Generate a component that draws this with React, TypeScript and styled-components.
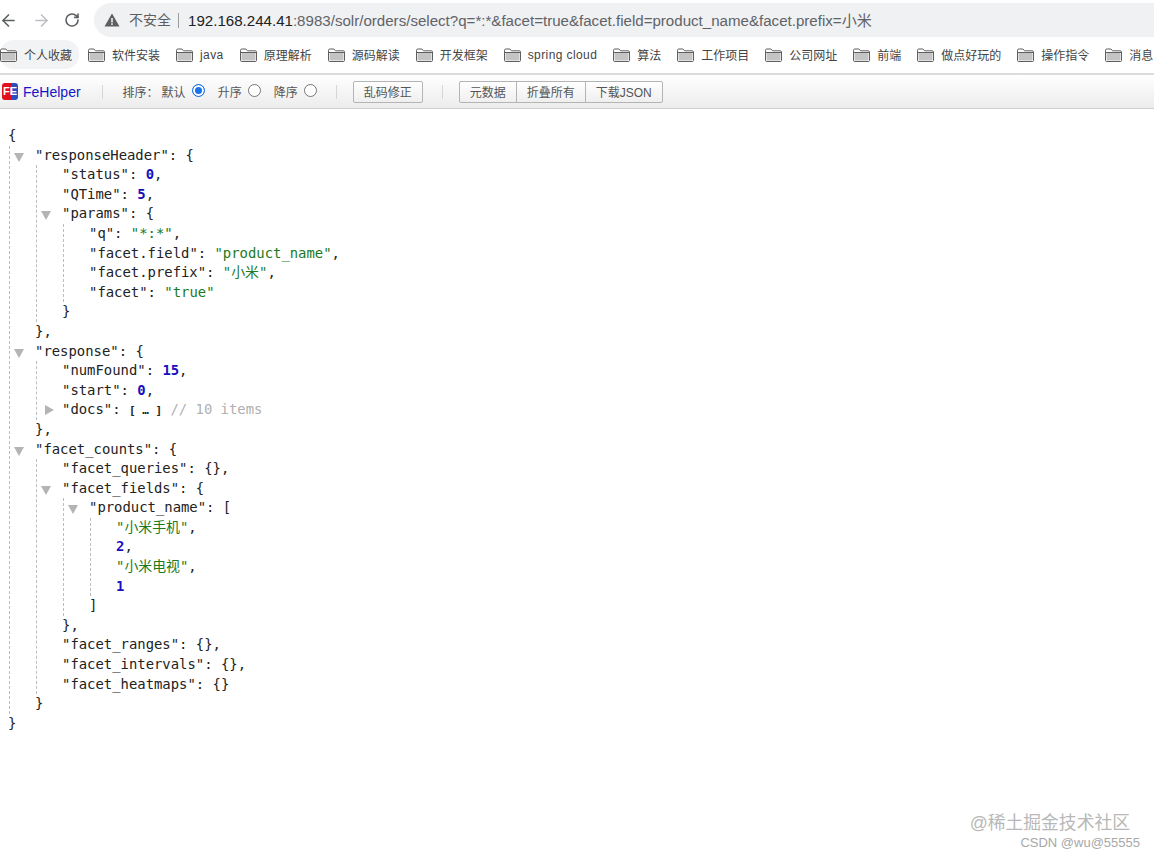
import { ReactNode } from "react"
import styled, { createGlobalStyle } from "styled-components"
import { ArrowLeft, ArrowRight, RotateCw } from "lucide-react"

type JsonValue = string | number | JsonValue[] | { [key: string]: JsonValue } | Collapsed
interface Collapsed {
  collapsed: number
}

const bookmarks = ['个人收藏', '软件安装', 'java', '原理解析', '源码解读', '开发框架', 'spring cloud', '算法', '工作项目', '公司网址', '前端', '做点好玩的', '操作指令', '消息']

const data: { [key: string]: JsonValue } = {
  responseHeader: {
    status: 0,
    QTime: 5,
    params: {
      q: '*:*',
      'facet.field': 'product_name',
      'facet.prefix': '小米',
      facet: 'true',
    },
  },
  response: {
    numFound: 15,
    start: 0,
    docs: { collapsed: 10 },
  },
  facet_counts: {
    facet_queries: {},
    facet_fields: {
      product_name: ['小米手机', 2, '小米电视', 1],
    },
    facet_ranges: {},
    facet_intervals: {},
    facet_heatmaps: {},
  },
}

function isCollapsed(value: JsonValue): value is Collapsed {
  return typeof value === 'object' && !Array.isArray(value) && 'collapsed' in value
}

function Entry({ name, value, last }: { name?: string, value: JsonValue, last: boolean }) {
  const label: ReactNode = name !== undefined ? <>"{name}": </> : null
  const comma = last ? '' : ','

  if (typeof value === 'string') {
    return <Line>{label}<Str>"{value}"</Str>{comma}</Line>
  }
  if (typeof value === 'number') {
    return <Line>{label}<Num>{value}</Num>{comma}</Line>
  }
  if (isCollapsed(value)) {
    return (
      <Line>
        <Arrow open={false} />
        {label}<Fold>[ … ]</Fold> <Comment>// {value.collapsed} items</Comment>{comma}
      </Line>
    )
  }

  const isList = Array.isArray(value)
  const items: [string | undefined, JsonValue][] = isList
    ? (value as JsonValue[]).map(item => [undefined, item])
    : Object.entries(value as { [key: string]: JsonValue })

  if (items.length === 0) {
    return <Line>{label}{isList ? '[]' : '{}'}{comma}</Line>
  }

  return (
    <div>
      <Line>
        {name !== undefined && <Arrow open />}
        {label}{isList ? '[' : '{'}
      </Line>
      <Children>
        {items.map(([key, item], i) => (
          <Entry key={i} name={key} value={item} last={i === items.length - 1} />
        ))}
      </Children>
      <Line>{isList ? ']' : '}'}{comma}</Line>
    </div>
  )
}

function FolderIcon() {
  return (
    <FolderSvg viewBox="0 0 17 14">
      <path d="M.5 12.5V2.2c0-.7.5-1.2 1.2-1.2h4.2l1.6 1.8h7.8c.7 0 1.2.5 1.2 1.2v8.5c0 .7-.5 1-1.2 1H1.7c-.7 0-1.2-.3-1.2-1Z" fill="#fff" stroke="#5f5f5f" />
      <rect x="1.5" y="5" width="14" height="7.5" fill="#c4c4c4" />
      <path d="M1 4.5h15" stroke="#5f5f5f" />
    </FolderSvg>
  )
}

export default function App() {
  return (
    <>
      <GlobalStyle />
      <NavBar>
        <NavIcons>
          <ArrowLeft size={19} color="#5c5f62" strokeWidth={2} />
          <ArrowRight size={19} color="#bcbec1" strokeWidth={2} />
          <RotateCw size={16} color="#5c5f62" strokeWidth={2.4} />
        </NavIcons>
        <Omnibox>
          <svg width="16" height="14" viewBox="0 0 16 14">
            <path d="M8 0.5 15.5 13.5H.5Z" fill="#5c5f62" />
            <rect x="7.2" y="5" width="1.6" height="4.5" fill="#f0f1f3" />
            <rect x="7.2" y="10.3" width="1.6" height="1.6" fill="#f0f1f3" />
          </svg>
          <Insecure>不安全</Insecure>
          <Url><Host>192.168.244.41</Host>:8983/solr/orders/select?q=*:*&amp;facet=true&amp;facet.field=product_name&amp;facet.prefix=小米</Url>
        </Omnibox>
      </NavBar>
      <BookmarkBar>
        {bookmarks.map((title, i) => (
          <Bookmark key={title} active={i === 0} latin={/^[a-z ]+$/.test(title)}>
            <FolderIcon />
            {title}
          </Bookmark>
        ))}
      </BookmarkBar>
      <ToolBar>
        <Brand>
          <Logo>FE</Logo>
          FeHelper
        </Brand>
        <Divider />
        <SortLabel>排序：</SortLabel>
        <SortOption>默认<Radio checked /></SortOption>
        <SortOption>升序<Radio /></SortOption>
        <SortOption>降序<Radio /></SortOption>
        <Divider />
        <Button>乱码修正</Button>
        <Divider />
        <ButtonGroup>
          <Button>元数据</Button>
          <Button>折叠所有</Button>
          <Button>下载JSON</Button>
        </ButtonGroup>
      </ToolBar>
      <JsonBody>
        <Entry value={data} last />
      </JsonBody>
      <Watermark>
        <WatermarkMain>@稀土掘金技术社区</WatermarkMain>
        <WatermarkSub>CSDN @wu@55555</WatermarkSub>
      </Watermark>
    </>
  )
}

const GlobalStyle = createGlobalStyle`
  html, body {
    margin: 0;
    background: #fff;
    font-family: "Liberation Sans", "Noto Sans CJK SC", sans-serif;
  }
  #root {
    height: 857px;
    position: relative;
    overflow: hidden;
  }
`
const NavBar = styled.div`
  display: flex;
  align-items: center;
  height: 40px;
  box-sizing: border-box;
  padding-bottom: 3px;
  padding-top: 3px;
`
const NavIcons = styled.div`
  display: flex;
  align-items: center;
  justify-content: space-between;
  width: 81px;
  margin: 0 14px 0 -1px;
`
const Omnibox = styled.div`
  flex: 1;
  display: flex;
  align-items: center;
  height: 34px;
  padding-left: 10px;
  background: #f0f1f3;
  border-radius: 17px 0 0 17px;
`
const Insecure = styled.span`
  margin-left: 9px;
  padding-right: 7px;
  border-right: 1px solid #9a9da0;
  font-size: 14px;
  line-height: 15px;
  color: #5c5f62;
`
const Url = styled.span`
  margin-left: 9px;
  padding-bottom: 2px;
  font-size: 15.1px;
  color: #5f6368;
  white-space: nowrap;
`
const Host = styled.span`
  color: #202124;
`
const BookmarkBar = styled.div`
  display: flex;
  align-items: center;
  gap: 16px;
  height: 33px;
  overflow: hidden;
  border-bottom: 2px solid #dcdcdc;
`
const Bookmark = styled.div<{ active?: boolean, latin?: boolean }>`
  display: flex;
  align-items: center;
  flex: none;
  gap: 7px;
  height: 29px;
  margin-top: -4px;
  font-size: 12px;
  letter-spacing: ${props => props.latin ? '0.4px' : '0'};
  color: #444;
  border-radius: 14px;
  padding-right: ${props => props.active ? '7px' : '0'};
  margin-right: ${props => props.active ? '-7px' : '0'};
  background: ${props => props.active ? '#f1f3f4' : 'transparent'};
`
const FolderSvg = styled.svg`
  width: 17px;
  height: 14px;
  flex: none;
`
const ToolBar = styled.div`
  display: flex;
  align-items: center;
  height: 33px;
  padding-left: 2px;
  background: linear-gradient(#fff, #ececec);
  border-bottom: 1px solid #cfcfcf;
  font-size: 12px;
  color: #555;
`
const Brand = styled.div`
  display: flex;
  align-items: center;
  gap: 5px;
  margin-right: 2px;
  font-size: 14px;
  color: #1414c8;
`
const Logo = styled.span`
  width: 16px;
  height: 17px;
  border-radius: 3px;
  background: linear-gradient(90deg, #e0101c 55%, #2a4fc0 55%);
  color: #fff;
  font-size: 11px;
  font-weight: 700;
  line-height: 17px;
  text-align: center;
`
const Divider = styled.span`
  width: 1px;
  height: 14px;
  margin: 0 16px 0 19px;
  background: #d6d6d6;
`
const SortLabel = styled.span`
  margin: 0 3px 0 4px;
`
const SortOption = styled.label`
  display: flex;
  align-items: center;
  gap: 6px;
  margin-right: 13px;
  &:last-of-type {
    margin-right: 0;
  }
`
const Radio = styled.span<{ checked?: boolean }>`
  width: 13px;
  height: 13px;
  box-sizing: border-box;
  margin-top: -3px;
  border-radius: 50%;
  border: ${props => props.checked ? '1px solid #1a73e8' : '1px solid #767676'};
  background: ${props => props.checked ? '#1a73e8' : '#fff'};
  box-shadow: ${props => props.checked ? 'inset 0 0 0 2px #fff' : 'none'};
`
const Button = styled.button`
  height: 22px;
  padding: 0 10px 1px;
  border: 1px solid #b4b4b4;
  border-radius: 2px;
  background: linear-gradient(#fff, #efefef);
  font-family: inherit;
  font-size: 12px;
  color: #555;
`
const ButtonGroup = styled.div`
  display: flex;
  ${Button} {
    margin-left: -1px;
    border-radius: 0;
  }
  ${Button}:first-child {
    margin-left: 0;
    border-radius: 2px 0 0 2px;
  }
  ${Button}:last-child {
    border-radius: 0 2px 2px 0;
  }
`
const JsonBody = styled.div`
  padding: 17px 0 0 8px;
  font-family: "DejaVu Sans Mono", "Noto Sans CJK SC", monospace;
  font-size: 13.9px;
  line-height: 19.6px;
  color: #222;
`
const Line = styled.div`
  position: relative;
  height: 19.6px;
  white-space: pre;
`
const Arrow = styled.i<{ open: boolean }>`
  position: absolute;
  left: ${props => props.open ? '-21px' : '-17px'};
  top: ${props => props.open ? '7px' : '5px'};
  width: 0;
  height: 0;
  border-style: solid;
  border-color: transparent;
  border-width: ${props => props.open ? '9px 5.5px 0 5.5px' : '5.5px 0 5.5px 9px'};
  border-top-color: ${props => props.open ? '#b4b4b4' : 'transparent'};
  border-left-color: ${props => props.open ? 'transparent' : '#b4b4b4'};
`
const Children = styled.div`
  margin-left: 1px;
  padding-left: 25px;
  border-left: 1px dashed #bdbdbd;
`
const Str = styled.span`
  color: #1b7a1b;
`
const Num = styled.span`
  color: #1a0fc0;
  font-weight: 700;
`
const Fold = styled.span`
  font-size: 11px;
  font-weight: 700;
`
const Comment = styled.span`
  color: #b0b0b0;
`
const Watermark = styled.div`
  position: absolute;
  top: 812px;
  right: 14px;
  display: flex;
  flex-direction: column;
  align-items: flex-end;
  pointer-events: none;
`
const WatermarkMain = styled.span`
  margin-right: 10px;
  font-size: 17.8px;
  line-height: 23px;
  color: #b8b8b8;
  white-space: nowrap;
`
const WatermarkSub = styled.span`
  font-size: 13px;
  line-height: 15px;
  color: #a8a8a8;
  white-space: nowrap;
`
